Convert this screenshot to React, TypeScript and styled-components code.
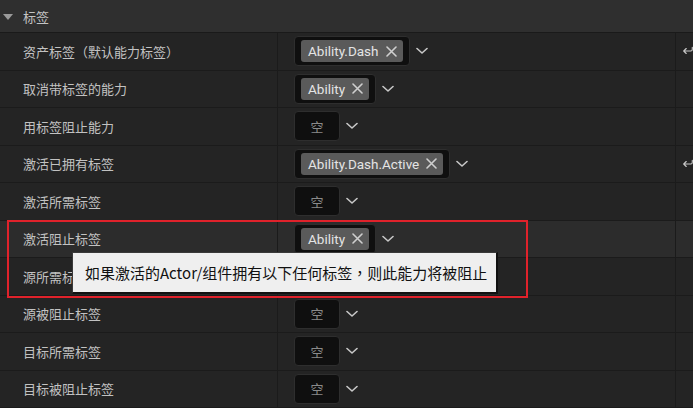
import React from "react";
import styled, { createGlobalStyle } from "styled-components";

const Global = createGlobalStyle`
  html, body { margin: 0; padding: 0; background: #242424; }
  body { width: 693px; height: 408px; overflow: hidden; font-family: Roboto, "Noto Sans CJK SC", "Noto Sans", sans-serif; }
`;

const Panel = styled.div`
  position: relative;
  width: 693px;
  height: 408px;
  overflow: hidden;
  background: #242424;
`;

const Header = styled.div`
  display: flex;
  align-items: center;
  height: 32px;
  border-bottom: 1px solid #1a1a1a;
  background: #2f2f2f;
  box-sizing: content-box;
  color: #c4c4c4;
  font-size: 13px;
  font-family: "Noto Sans CJK SC", sans-serif;
  gap: 10px;
  padding-left: 3px;
`;

const Triangle = styled.span`
  width: 0;
  height: 0;
  border-left: 5px solid transparent;
  border-right: 5px solid transparent;
  border-top: 6px solid #9a9a9a;
  margin-top: 1px;
`;

const Row = styled.div<{ $hover?: boolean }>`
  display: grid;
  grid-template-columns: 278px 398px 17px;
  height: 37.5px;
  box-sizing: border-box;
  border-bottom: 1px solid #1b1b1b;
  background: ${(p) => (p.$hover ? "#2c2c2c" : "#242424")};
`;

const LabelCell = styled.div`
  display: flex;
  align-items: center;
  padding-left: 23px;
  border-right: 1px solid #1b1b1b;
  color: #c2c2c2;
  font-size: 13px;
  font-family: "Noto Sans CJK SC", sans-serif;
  white-space: nowrap;
`;

const ValueCell = styled.div`
  display: flex;
  align-items: center;
  padding-left: 16px;
  gap: 6px;
  border-right: 1px solid #1b1b1b;
`;

const ResetCell = styled.div`
  display: flex;
  align-items: center;
  padding-left: 7px;
`;

const TagBox = styled.div`
  display: flex;
  align-items: center;
  height: 30px;
  box-sizing: border-box;
  padding: 0 6px;
  border: 1px solid #2e2e2e;
  border-radius: 4px;
  background: #0f0f0f;
`;

const EmptyBox = styled(TagBox)`
  width: 46px;
  justify-content: center;
  color: #8a8a8a;
  font-size: 13px;
  font-family: "Noto Sans CJK SC", sans-serif;
`;

const Chip = styled.div`
  display: flex;
  align-items: center;
  gap: 7px;
  height: 22px;
  padding: 0 6px 0 7px;
  border-radius: 3px;
  background: #5a5a5a;
  color: #e4e4e4;
  font-size: 13.5px;
  font-family: Roboto, sans-serif;
`;

const Tooltip = styled.div`
  position: absolute;
  left: 72px;
  top: 252px;
  width: 426px;
  height: 42px;
  box-sizing: border-box;
  display: flex;
  align-items: center;
  padding-left: 12px;
  background: #efefef;
  border: 1px solid #3a3a3a;
  border-right: 2px solid #111;
  border-bottom: 2px solid #111;
  color: #111;
  font-size: 15px;
  font-family: "Noto Sans CJK TC", "Noto Sans CJK SC", sans-serif;
  white-space: nowrap;
`;

const Highlight = styled.div`
  position: absolute;
  left: 7px;
  top: 220px;
  width: 521px;
  height: 78px;
  box-sizing: border-box;
  border: 2.5px solid #e0222b;
  pointer-events: none;
`;

const XIcon = () => (
  <svg width="11" height="11" viewBox="0 0 11 11">
    <path d="M1 1L10 10M10 1L1 10" stroke="#cfcfcf" strokeWidth="1.6" strokeLinecap="round" />
  </svg>
);

const Chevron = () => (
  <svg width="12" height="8" viewBox="0 0 12 8">
    <path d="M1 1.5L6 6L11 1.5" stroke="#c8c8c8" strokeWidth="1.6" fill="none" strokeLinecap="round" strokeLinejoin="round" />
  </svg>
);

const ResetArrow = () => (
  <svg width="14" height="12" viewBox="0 0 14 12">
    <path d="M1 6H11C12.5 6 13 5 13 3.5V1M1 6L4.5 2.5M1 6L4.5 9.5" stroke="#c8c8c8" strokeWidth="1.6" fill="none" strokeLinecap="round" strokeLinejoin="round" />
  </svg>
);

type RowData = { label: string; tag?: string; reset?: boolean; hover?: boolean };

const rows: RowData[] = [
  { label: "资产标签（默认能力标签）", tag: "Ability.Dash", reset: true },
  { label: "取消带标签的能力", tag: "Ability" },
  { label: "用标签阻止能力" },
  { label: "激活已拥有标签", tag: "Ability.Dash.Active", reset: true },
  { label: "激活所需标签" },
  { label: "激活阻止标签", tag: "Ability", hover: true },
  { label: "源所需标签" },
  { label: "源被阻止标签" },
  { label: "目标所需标签" },
  { label: "目标被阻止标签" },
];

export default function App() {
  return (
    <>
      <Global />
      <Panel>
        <Header>
          <Triangle />
          <span>标签</span>
        </Header>
        {rows.map((r) => (
          <Row key={r.label} $hover={r.hover}>
            <LabelCell>{r.label}</LabelCell>
            <ValueCell>
              {r.tag ? (
                <TagBox>
                  <Chip>
                    {r.tag}
                    <XIcon />
                  </Chip>
                </TagBox>
              ) : (
                <EmptyBox>空</EmptyBox>
              )}
              <Chevron />
            </ValueCell>
            <ResetCell>{r.reset && <ResetArrow />}</ResetCell>
          </Row>
        ))}
        <Highlight />
        <Tooltip>如果激活的Actor/组件拥有以下任何标签，则此能力将被阻止</Tooltip>
      </Panel>
    </>
  );
}
